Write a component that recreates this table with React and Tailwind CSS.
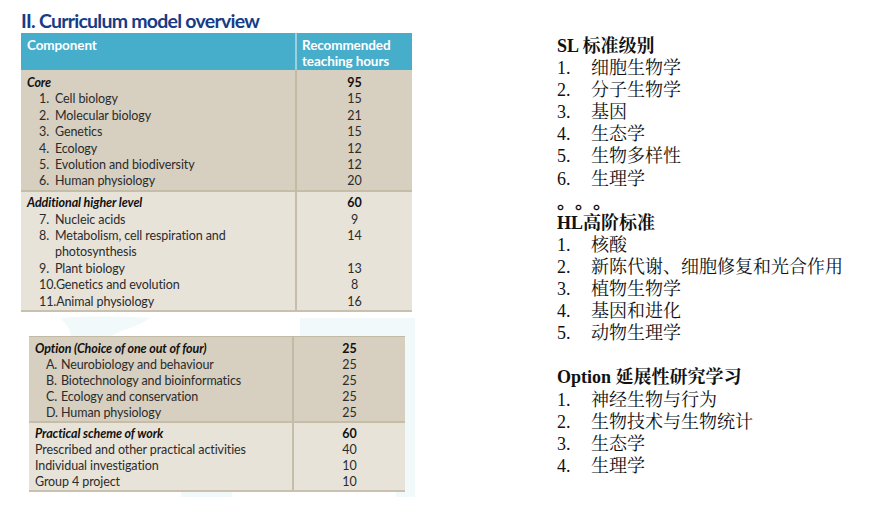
import React from "react";

const core = [
  ["1.", "Cell biology", "15"],
  ["2.", "Molecular biology", "21"],
  ["3.", "Genetics", "15"],
  ["4.", "Ecology", "12"],
  ["5.", "Evolution and biodiversity", "12"],
  ["6.", "Human physiology", "20"],
];

const ahl = [
  ["7.", "Nucleic acids", "9"],
  ["8.", "Metabolism, cell respiration and", "14"],
  ["", "photosynthesis", ""],
  ["9.", "Plant biology", "13"],
  ["10.", "Genetics and evolution", "8"],
  ["11.", "Animal physiology", "16"],
];

const options = [
  ["A.", "Neurobiology and behaviour", "25"],
  ["B.", "Biotechnology and bioinformatics", "25"],
  ["C.", "Ecology and conservation", "25"],
  ["D.", "Human physiology", "25"],
];

const practical = [
  ["Prescribed and other practical activities", "40"],
  ["Individual investigation", "10"],
  ["Group 4 project", "10"],
];

const tableFont = { fontFamily: "Lato, 'Open Sans', sans-serif" };

function ListLine({ n, t }) {
  return (
    <div className="flex">
      <span className="w-[34px] shrink-0">{n}</span>
      <span>{t}</span>
    </div>
  );
}

export default function App() {
  const sl = [
    { n: "1.", t: "细胞生物学" },
    { n: "2.", t: "分子生物学" },
    { n: "3.", t: "基因" },
    { n: "4.", t: "生态学" },
    { n: "5.", t: "生物多样性" },
    { n: "6.", t: "生理学" },
  ];
  const hl = [
    { n: "1.", t: "核酸" },
    { n: "2.", t: "新陈代谢、细胞修复和光合作用" },
    { n: "3.", t: "植物生物学" },
    { n: "4.", t: "基因和进化" },
    { n: "5.", t: "动物生理学" },
  ];
  const opt = [
    { n: "1.", t: "神经生物与行为" },
    { n: "2.", t: "生物技术与生物统计" },
    { n: "3.", t: "生态学" },
    { n: "4.", t: "生理学" },
  ];
  return (
    <div className="relative w-[879px] h-[516px] bg-white overflow-hidden flex">
      {/* faint map drawing behind lower table */}
      <svg
        className="absolute left-0 top-0"
        width="440"
        height="516"
        viewBox="0 0 440 516"
      >
        <path d="M60 318 C80 316 120 316 150 318 C140 326 120 330 110 337 L70 337 C72 330 66 324 60 318 Z" fill="#f1f9fb" />
        <path d="M300 318 L415 318 L415 497 L396 497 L396 489 L300 489 Z" fill="#f1f9fb" />
        <path d="M181 489 L232 489 L232 497 L181 497 Z" fill="#f1f9fb" />
      </svg>

      {/* Left: curriculum table */}
      <div className="relative w-[420px] shrink-0 pl-[21px] pt-[7px]" style={tableFont}>
        <div className="h-[26px] text-[19.5px] leading-[27px] font-bold text-[#173c86] tracking-[-0.75px]">
          II. Curriculum model overview
        </div>

        <div className="w-[391px] text-[12.5px] text-[#2b2b2b] tracking-[-0.1px]">
          {/* header */}
          <div className="flex h-[37px] bg-[#46adcb] text-white font-bold text-[13.5px] leading-[16px]">
            <div className="flex-1 pl-[6px] pt-[4px]">Component</div>
            <div className="w-[2px] bg-[#9dcfdc]" />
            <div className="w-[115px] pl-[5px] pt-[4px]">
              Recommended
              <br />
              teaching hours
            </div>
          </div>
          {/* core */}
          <div className="flex bg-[#d7cfbf]">
            <div className="flex-1 pt-[5px]">
              <div className="h-[16.4px] leading-[16.4px] pl-[6px] font-bold italic text-[#111]">Core</div>
              {core.map(([n, t]) => (
                <div key={t} className="flex h-[16.4px] leading-[16.4px] pl-[18px]">
                  <span className="w-[16px] shrink-0">{n}</span>
                  <span>{t}</span>
                </div>
              ))}
            </div>
            <div className="w-[2px] bg-[#c3baa6]" />
            <div className="w-[115px] pt-[5px] text-center">
              <div className="h-[16.4px] leading-[16.4px] font-bold text-[#111]">95</div>
              {core.map(([n, t, v]) => (
                <div key={t} className="h-[16.4px] leading-[16.4px]">{v}</div>
              ))}
            </div>
          </div>
          <div className="h-[2px] bg-[#c6bda9]" />
          {/* AHL */}
          <div className="flex bg-[#e8e3d9]">
            <div className="flex-1 pt-[3.5px] pb-[0.5px]">
              <div className="h-[16.4px] leading-[16.4px] pl-[6px] font-bold italic text-[#111]">
                Additional higher level
              </div>
              {ahl.map(([n, t]) => (
                <div key={t} className="flex h-[16.4px] leading-[16.4px] pl-[18px]">
                  {n.length > 2 ? (
                    <span>
                      {n}
                      {t}
                    </span>
                  ) : (
                    <>
                      <span className="w-[16px] shrink-0">{n}</span>
                      <span>{t}</span>
                    </>
                  )}
                </div>
              ))}
            </div>
            <div className="w-[2px] bg-[#c6bda9]" />
            <div className="w-[115px] pt-[3.5px] pb-[0.5px] text-center">
              <div className="h-[16.4px] leading-[16.4px] font-bold text-[#111]">60</div>
              {ahl.map(([n, t, v]) => (
                <div key={t} className="h-[16.4px] leading-[16.4px]">{v}</div>
              ))}
            </div>
          </div>
          <div className="h-[2px] bg-[#c9c0ad]" />
        </div>

        {/* second table */}
        <div className="mt-[24px] ml-[8px] w-[376px] text-[12.5px] text-[#2b2b2b] tracking-[-0.1px]">
          <div className="h-[1px] bg-[#c3baa6]" />
          <div className="flex bg-[#d7cfbf]">
            <div className="flex-1 pt-[4px]">
              <div className="h-[16px] leading-[16px] pl-[6px] font-bold italic text-[#111]">
                Option (Choice of one out of four)
              </div>
              {options.map(([n, t]) => (
                <div key={t} className="flex h-[16px] leading-[16px] pl-[17px]">
                  <span className="w-[15px] shrink-0">{n}</span>
                  <span>{t}</span>
                </div>
              ))}
            </div>
            <div className="w-[2px] bg-[#c3baa6]" />
            <div className="w-[111px] pt-[4px] text-center">
              <div className="h-[16px] leading-[16px] font-bold text-[#111]">25</div>
              {options.map(([n, t, v]) => (
                <div key={t} className="h-[16px] leading-[16px]">{v}</div>
              ))}
            </div>
          </div>
          <div className="h-[2px] bg-[#c6bda9]" />
          <div className="flex bg-[#e8e3d9]">
            <div className="flex-1 pt-[3px]">
              <div className="h-[16px] leading-[16px] pl-[6px] font-bold italic text-[#111]">
                Practical scheme of work
              </div>
              {practical.map(([t]) => (
                <div key={t} className="h-[16px] leading-[16px] pl-[6px]">{t}</div>
              ))}
            </div>
            <div className="w-[2px] bg-[#c6bda9]" />
            <div className="w-[111px] pt-[3px] text-center">
              <div className="h-[16px] leading-[16px] font-bold text-[#111]">60</div>
              {practical.map(([t, v]) => (
                <div key={t} className="h-[16px] leading-[16px]">{v}</div>
              ))}
            </div>
          </div>
          <div className="h-[2px] bg-[#c9c0ad]" />
        </div>
      </div>

      {/* Right: Chinese outline */}
      <div
        className="ml-[137px] pt-[35px] text-[18px] leading-[22.1px] text-[#111] [text-spacing-trim:space-all]"
        style={{
          fontFamily:
            "'Liberation Serif', 'Noto Serif CJK SC', 'Noto Sans CJK SC', serif",
        }}
      >
        <div className="font-bold">SL 标准级别</div>
        {sl.map((l) => (
          <ListLine key={l.n} {...l} />
        ))}
        <div
          className="font-bold [text-spacing-trim:space-all]"
          style={{ fontFamily: "'Noto Sans CJK SC', sans-serif" }}
        >
          。。。
        </div>
        <div className="font-bold">HL高阶标准</div>
        {hl.map((l) => (
          <ListLine key={l.n} {...l} />
        ))}
        <div className="h-[22.1px]" />
        <div className="font-bold">Option 延展性研究学习</div>
        {opt.map((l) => (
          <ListLine key={l.n} {...l} />
        ))}
      </div>
    </div>
  );
}
